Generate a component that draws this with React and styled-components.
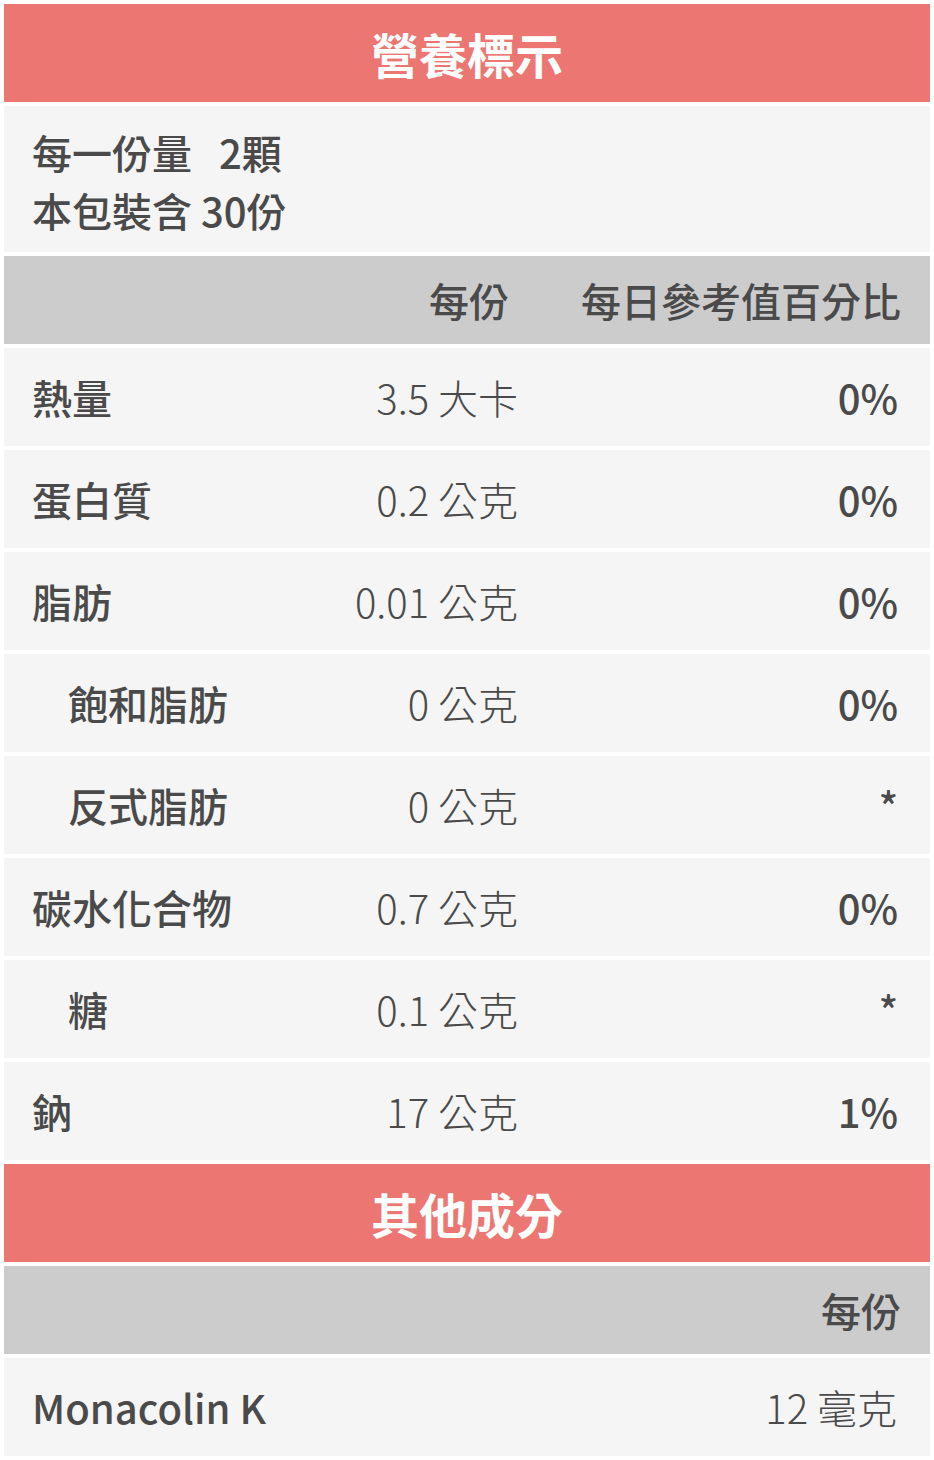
import React from "react";
import styled, { createGlobalStyle } from "styled-components";

const GlobalStyle = createGlobalStyle`
  html, body {
    margin: 0;
    padding: 0;
    background: #ffffff;
  }
  body {
    font-family: "Noto Sans CJK TC", "Noto Sans", sans-serif;
    color: #4a4a4a;
  }
`;

const Table = styled.div`
  display: flex;
  flex-direction: column;
  gap: 4px;
  padding: 4px;
  width: 926px;
`;

const TitleBar = styled.div`
  height: 98px;
  background: #ec7671;
  color: #ffffff;
  font-size: 48px;
  font-weight: 700;
  display: flex;
  align-items: center;
  justify-content: center;
`;

const Info = styled.div`
  background: #f5f5f5;
  height: 146px;
  box-sizing: border-box;
  padding: 17px 28px 13px;
  font-size: 40px;
  font-weight: 500;
  line-height: 58px;
`;

const Row = styled.div`
  display: grid;
  grid-template-columns: ${(p) => p.$cols || "1fr 200px 412px"};
  align-items: center;
  height: ${(p) => (p.$head ? 88 : 98)}px;
  background: ${(p) => (p.$head ? "#cccccc" : "#f5f5f5")};
  font-size: 40px;
`;

const Label = styled.div`
  padding-left: ${(p) => (p.$indent ? 64 : 28)}px;
  font-weight: 500;
  white-space: nowrap;
`;

const Amount = styled.div`
  text-align: right;
  font-weight: 300;
  white-space: nowrap;
  padding-right: ${(p) => p.$pad || 0}px;
`;

const Percent = styled.div`
  text-align: right;
  padding-right: 32px;
  font-weight: 500;
  white-space: nowrap;
`;

const HeadCell = styled.div`
  text-align: right;
  font-weight: 500;
  white-space: nowrap;
  padding-right: ${(p) => p.$pad || 0}px;
`;

const nutrients = [
  { name: "熱量", amount: "3.5 大卡", daily: "0%" },
  { name: "蛋白質", amount: "0.2 公克", daily: "0%" },
  { name: "脂肪", amount: "0.01 公克", daily: "0%" },
  { name: "飽和脂肪", amount: "0 公克", daily: "0%", indent: true },
  { name: "反式脂肪", amount: "0 公克", daily: "*", indent: true },
  { name: "碳水化合物", amount: "0.7 公克", daily: "0%" },
  { name: "糖", amount: "0.1 公克", daily: "*", indent: true },
  { name: "鈉", amount: "17 公克", daily: "1%" },
];

export default function App() {
  return (
    <>
      <GlobalStyle />
      <Table>
        <TitleBar>營養標示</TitleBar>
        <Info>
          <div>每一份量{"\u00a0\u00a0\u00a0"}2顆</div>
          <div>本包裝含 30份</div>
        </Info>
        <Row $head>
          <div />
          <HeadCell $pad={9}>每份</HeadCell>
          <HeadCell $pad={29}>每日參考值百分比</HeadCell>
        </Row>
        {nutrients.map((n) => (
          <Row key={n.name}>
            <Label $indent={n.indent}>{n.name}</Label>
            <Amount>{n.amount}</Amount>
            <Percent>{n.daily}</Percent>
          </Row>
        ))}
        <TitleBar>其他成分</TitleBar>
        <Row $head $cols="1fr auto">
          <div />
          <HeadCell $pad={29}>每份</HeadCell>
        </Row>
        <Row $cols="1fr auto">
          <Label>Monacolin K</Label>
          <Amount $pad={33}>12 毫克</Amount>
        </Row>
      </Table>
    </>
  );
}
